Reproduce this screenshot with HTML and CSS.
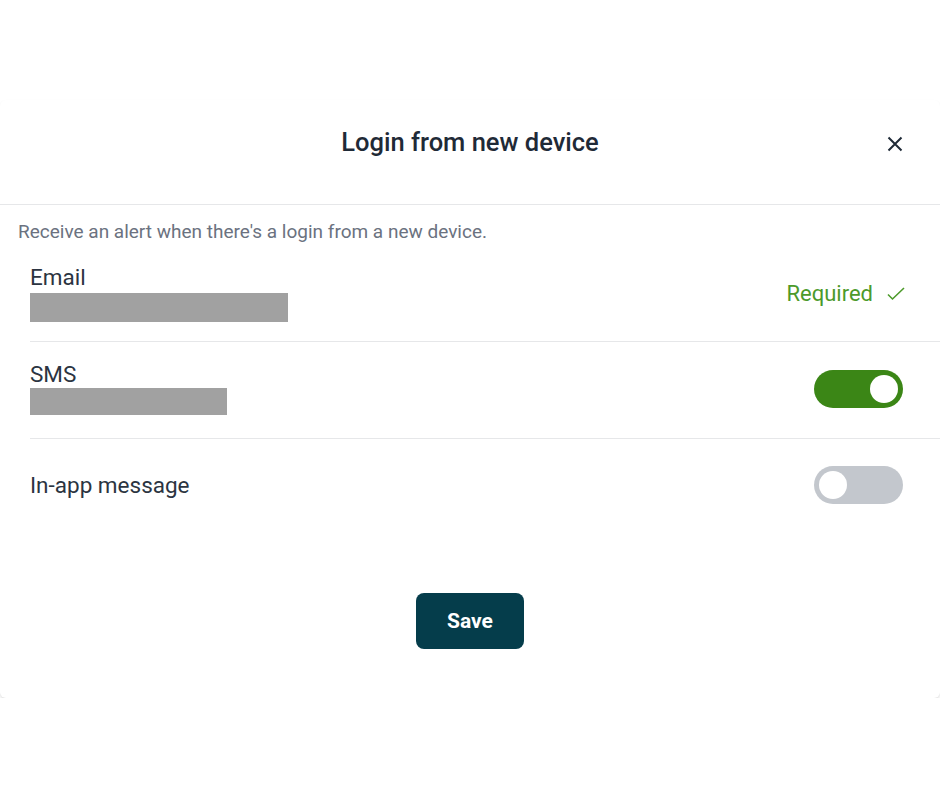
FILE: index.html
```html
<!DOCTYPE html>
<html lang="en">
  <head>
    <meta charset="UTF-8" />
    <meta name="viewport" content="width=device-width, initial-scale=1.0" />
    <title>Login from new device</title>
    <link rel="stylesheet" href="styles.css">
  </head>
  <body>
    <div class="modal">
      <div class="modal-header">
        <span></span>
        <h2 class="modal-title">Login from new device</h2>
        <button class="close-btn" type="button" aria-label="Close">
          <svg width="16" height="16" viewBox="0 0 16 16">
            <path d="M1.5 1.5L14.5 14.5M14.5 1.5L1.5 14.5" stroke="#1f2a37" stroke-width="2" fill="none" />
          </svg>
        </button>
      </div>

      <p class="intro">Receive an alert when there's a login from a new device.</p>

      <div class="channel channel-email">
        <div class="channel-info">
          <div class="channel-name">Email</div>
          <div class="redacted redacted-email"></div>
        </div>
        <div class="required">
          Required
          <svg width="22" height="22" viewBox="0 0 22 22">
            <path d="M3 11.5l4.5 4.5L19 5" stroke="#4c9a2a" stroke-width="1.6" fill="none" />
          </svg>
        </div>
      </div>

      <div class="channel channel-sms">
        <div class="channel-info">
          <div class="channel-name">SMS</div>
          <div class="redacted redacted-sms"></div>
        </div>
        <label class="switch">
          <input type="checkbox" checked />
          <span class="slider"></span>
        </label>
      </div>

      <div class="channel channel-last">
        <div class="channel-info">
          <div class="channel-name">In-app message</div>
        </div>
        <label class="switch">
          <input type="checkbox" />
          <span class="slider"></span>
        </label>
      </div>

      <div class="modal-footer">
        <button class="save-btn" type="button">Save</button>
      </div>
    </div>
  </body>
</html>
```

FILE: styles.css
```css
body {
  margin: 0;
  font-family: Roboto, "Liberation Sans", Arial, sans-serif;
  background: #ffffff;
  color: #1f2a37;
}
.modal {
  margin-top: 100px;
  background: #ffffff;
  border-radius: 6px;
  box-shadow: 0 2px 3px rgba(0, 0, 0, 0.12);
}
.modal-header {
  display: grid;
  grid-template-columns: 1fr auto 1fr;
  align-items: center;
  padding: 28px 37px 48px;
  border-bottom: 1px solid #e6e7e9;
}
.modal-title {
  margin: 0;
  font-size: 25.5px;
  line-height: 28px;
  font-weight: 500;
  color: #1f2a37;
}
.close-btn {
  justify-self: end;
  display: flex;
  background: none;
  border: none;
  padding: 0;
  margin-top: 4px;
  cursor: pointer;
}
.intro {
  margin: 0;
  padding: 16px 18px 3px;
  font-size: 19px;
  line-height: 22px;
  color: #6b7280;
}
.channel {
  display: flex;
  align-items: center;
  justify-content: space-between;
  margin-left: 30px;
  padding: 19px 37px 19px 0;
  border-bottom: 1px solid #e6e7e9;
}
.channel-sms {
  padding-top: 20px;
  padding-bottom: 23px;
}
.channel-last {
  border-bottom: none;
  padding-top: 27px;
  padding-bottom: 26px;
}
.channel-name {
  font-size: 22.5px;
  line-height: 24px;
  color: #2b3441;
}
.redacted {
  background: #a1a1a1;
}
.redacted-email {
  width: 258px;
  height: 29px;
  margin-top: 4px;
}
.redacted-sms {
  width: 197px;
  height: 27px;
  margin-top: 2px;
}
.required {
  display: flex;
  align-items: center;
  gap: 12px;
  margin-right: -4px;
  font-size: 22px;
  color: #4c9a2a;
}
.switch {
  position: relative;
  display: inline-block;
  width: 89px;
  height: 38px;
}
.switch input {
  opacity: 0;
  width: 0;
  height: 0;
}
.slider {
  position: absolute;
  inset: 0;
  background: #c3c7cd;
  border-radius: 19px;
  cursor: pointer;
}
.slider::before {
  content: "";
  position: absolute;
  left: 5px;
  top: 5px;
  width: 28px;
  height: 28px;
  border-radius: 50%;
  background: #ffffff;
}
.switch input:checked + .slider {
  background: #3b8616;
}
.switch input:checked + .slider::before {
  left: 56px;
}
.modal-footer {
  display: flex;
  justify-content: center;
  padding: 63px 0 49px;
}
.save-btn {
  height: 56px;
  padding: 0 31px;
  background: #053d4b;
  color: #ffffff;
  border: none;
  border-radius: 8px;
  font-family: inherit;
  font-size: 21px;
  font-weight: 700;
  cursor: pointer;
}
```
